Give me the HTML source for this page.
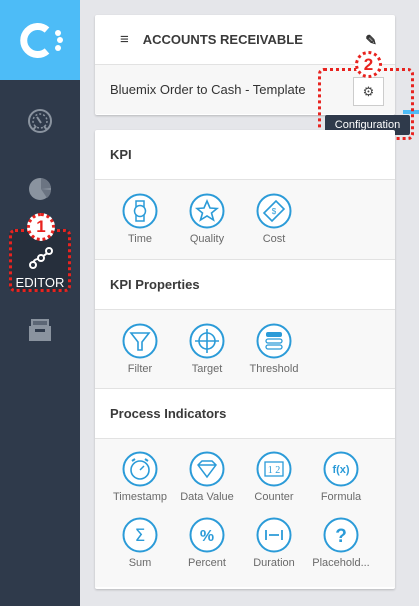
<!DOCTYPE html><html><head><style>
*{margin:0;padding:0;box-sizing:border-box}
body{width:419px;height:606px;background:#e5e6ea;font-family:"Liberation Sans",sans-serif;position:relative;overflow:hidden}
.side{position:absolute;left:0;top:0;width:80px;height:606px;background:#2f3a4b}
.logo{position:absolute;left:0;top:0;width:80px;height:80px;background:#4dbcf7}
.card{position:absolute;left:95px;width:300px;background:#fff;box-shadow:0 1px 2px rgba(0,0,0,.2);border-radius:2px}
.hdr{height:50px;border-bottom:1px solid #e2e2e2;font-weight:bold;font-size:13px;color:#3a3a3a;padding-left:15px;line-height:50px}
.row{background:#f8f8f8;border-bottom:1px solid #e2e2e2;position:relative}
.it{position:absolute;width:68px;text-align:center;font-size:11px;color:#6a6a6a}
.it svg{display:block;margin:0 auto 4px}
.abs{position:absolute}
</style></head><body>
<div class="side"></div>
<div class="logo"><svg width="80" height="80"><path d="M47 30 A14 14 0 1 0 47 51" fill="none" stroke="#fff" stroke-width="7"/><circle cx="58" cy="33" r="3" fill="#fff"/><circle cx="60" cy="40" r="3" fill="#fff"/><circle cx="58" cy="48" r="3" fill="#fff"/></svg></div>
<svg class="abs" style="left:27px;top:108px" width="26" height="26"><circle cx="13" cy="13" r="11" fill="none" stroke="#8a939f" stroke-width="2"/><circle cx="13" cy="13" r="7" fill="none" stroke="#8a939f" stroke-width="1.5" stroke-dasharray="2 2"/><path d="M10 9 L14 15" stroke="#8a939f" stroke-width="2"/><path d="M6 22 L9 18 M20 22 L17 18" stroke="#8a939f" stroke-width="2"/></svg>
<svg class="abs" style="left:27px;top:176px" width="26" height="26"><circle cx="13" cy="13" r="11" fill="#8a939f"/><path d="M14 2 A11 11 0 0 1 24 12 L14 13Z M14 13 L24 14 A11 11 0 0 1 20 22Z" fill="#6b7482"/></svg>
<div class="abs" style="left:9px;top:229px;width:62px;height:63px;background:#262f3c;border:3px dotted #e8231f;border-radius:6px"></div>
<svg class="abs" style="left:28px;top:246px" width="26" height="24"><path d="M5 18 C6 12 9 14 12 12 C14 10 17 10 20 6" fill="none" stroke="#fff" stroke-width="2"/><circle cx="5" cy="19" r="3" fill="#262f3c" stroke="#fff" stroke-width="2"/><circle cx="13" cy="12" r="3" fill="#262f3c" stroke="#fff" stroke-width="2"/><circle cx="21" cy="5" r="3" fill="#262f3c" stroke="#fff" stroke-width="2"/></svg>
<div class="abs" style="left:9px;top:275px;width:62px;text-align:center;color:#fff;font-size:13px">EDITOR</div>
<div class="abs" style="left:27px;top:213px;width:28px;height:28px;border-radius:50%;background:#fff;border:3px dotted #e8231f;color:#e8231f;font-weight:bold;font-size:17px;text-align:center;line-height:22px">1</div>
<svg class="abs" style="left:28px;top:318px" width="24" height="24"><rect x="1" y="8" width="22" height="15" fill="#8a939f"/><path d="M3 1 H21 V8 H3Z" fill="#8a939f"/><path d="M5 4 H19 M5 6 H19" stroke="#2f3a4b" stroke-width="1"/><rect x="7" y="11" width="10" height="3" fill="#2f3a4b"/></svg>

<div class="card" style="top:15px;height:100px">
<div class="hdr" style="padding-left:25px"><span style="font-size:15px;margin-right:14px">&#8801;</span>ACCOUNTS RECEIVABLE<span style="position:absolute;right:18px;font-size:14px;color:#333">&#9998;</span></div>
<div style="background:#f7f7f7;height:49px;line-height:49px;padding-left:15px;font-size:13px;color:#333">Bluemix Order to Cash - Template</div>
</div>
<div class="abs" style="left:353px;top:77px;width:31px;height:29px;background:#fff;border:1px solid #ccc;text-align:center;line-height:27px;font-size:13px;color:#444">&#9881;</div>
<div class="abs" style="left:403px;top:110px;width:16px;height:4px;background:#4dbcf7"></div>
<div class="abs" style="left:325px;top:115px;width:85px;height:20px;background:#2f3a4b;color:#fff;font-size:11px;text-align:center;line-height:20px;border-radius:2px">Configuration</div>
<div class="abs" style="left:318px;top:68px;width:96px;height:72px;border:3px dotted #e8231f;border-radius:6px"></div>
<div class="abs" style="left:355px;top:51px;width:27px;height:27px;border-radius:50%;background:#fff;border:3px dotted #e8231f;color:#e8231f;font-weight:bold;font-size:17px;text-align:center;line-height:21px">2</div>

<div class="card" style="top:130px;height:459px">
<div class="hdr">KPI</div>
<div class="row" style="height:80px">
<div class="it" style="left:11px;top:13px"><svg width="36" height="36"><circle cx="18" cy="18" r="16.5" fill="#fff" stroke="#2b9bd8" stroke-width="2"/><rect x="14" y="8" width="8" height="20" fill="none" stroke="#2b9bd8" stroke-width="1.5"/><circle cx="18" cy="18" r="5.5" fill="#fff" stroke="#2b9bd8" stroke-width="1.5"/></svg>Time</div>
<div class="it" style="left:78px;top:13px"><svg width="36" height="36"><circle cx="18" cy="18" r="16.5" fill="#fff" stroke="#2b9bd8" stroke-width="2"/><path d="M18 8 L21 15 L28 15.5 L22.5 20 L24.5 27 L18 23 L11.5 27 L13.5 20 L8 15.5 L15 15Z" fill="none" stroke="#2b9bd8" stroke-width="1.6"/></svg>Quality</div>
<div class="it" style="left:145px;top:13px"><svg width="36" height="36"><circle cx="18" cy="18" r="16.5" fill="#fff" stroke="#2b9bd8" stroke-width="2"/><path d="M8 20 L20 8 L28 16 L16 28Z" fill="none" stroke="#2b9bd8" stroke-width="1.6"/><text x="18" y="21" font-size="8" fill="#2b9bd8" text-anchor="middle" font-family="Liberation Sans">$</text></svg>Cost</div>
</div>
<div class="hdr">KPI Properties</div>
<div class="row" style="height:79px">
<div class="it" style="left:11px;top:13px"><svg width="36" height="36"><circle cx="18" cy="18" r="16.5" fill="#fff" stroke="#2b9bd8" stroke-width="2"/><path d="M9 10 H27 L20 19 V27 H16 V19Z" fill="none" stroke="#2b9bd8" stroke-width="1.6"/></svg>Filter</div>
<div class="it" style="left:78px;top:13px"><svg width="36" height="36"><circle cx="18" cy="18" r="16.5" fill="#fff" stroke="#2b9bd8" stroke-width="2"/><circle cx="18" cy="18" r="8" fill="none" stroke="#2b9bd8" stroke-width="1.6"/><path d="M18 6 V30 M6 18 H30" stroke="#2b9bd8" stroke-width="1.6"/></svg>Target</div>
<div class="it" style="left:145px;top:13px"><svg width="36" height="36"><circle cx="18" cy="18" r="16.5" fill="#fff" stroke="#2b9bd8" stroke-width="2"/><rect x="10" y="9" width="16" height="5" rx="2" fill="#2b9bd8"/><rect x="10" y="16" width="16" height="4" rx="2" fill="none" stroke="#2b9bd8" stroke-width="1.3"/><rect x="10" y="22" width="16" height="4" rx="2" fill="none" stroke="#2b9bd8" stroke-width="1.3"/></svg>Threshold</div>
</div>
<div class="hdr">Process Indicators</div>
<div class="row" style="height:148px;border-bottom:none">
<div class="it" style="left:11px;top:12px"><svg width="36" height="36"><circle cx="18" cy="18" r="16.5" fill="#fff" stroke="#2b9bd8" stroke-width="2"/><circle cx="18" cy="19" r="9" fill="none" stroke="#2b9bd8" stroke-width="1.6"/><path d="M18 19 L22 15" stroke="#2b9bd8" stroke-width="1.5"/><path d="M10 10 L13 8 M26 10 L23 8" stroke="#2b9bd8" stroke-width="2"/></svg>Timestamp</div>
<div class="it" style="left:78px;top:12px"><svg width="36" height="36"><circle cx="18" cy="18" r="16.5" fill="#fff" stroke="#2b9bd8" stroke-width="2"/><path d="M9 14 L13 10 H23 L27 14 L18 26Z M9 14 H27" fill="none" stroke="#2b9bd8" stroke-width="1.5"/></svg>Data Value</div>
<div class="it" style="left:145px;top:12px"><svg width="36" height="36"><circle cx="18" cy="18" r="16.5" fill="#fff" stroke="#2b9bd8" stroke-width="2"/><rect x="9" y="11" width="18" height="14" fill="none" stroke="#2b9bd8" stroke-width="1.3"/><text x="18" y="22" font-size="10" fill="#2b9bd8" text-anchor="middle" font-family="Liberation Serif">1 2</text></svg>Counter</div>
<div class="it" style="left:212px;top:12px"><svg width="36" height="36"><circle cx="18" cy="18" r="16.5" fill="#fff" stroke="#2b9bd8" stroke-width="2"/><text x="18" y="22" font-size="11" font-weight="bold" fill="#2b9bd8" text-anchor="middle" font-family="Liberation Sans">f(x)</text></svg>Formula</div>
<div class="it" style="left:11px;top:78px"><svg width="36" height="36"><circle cx="18" cy="18" r="16.5" fill="#fff" stroke="#2b9bd8" stroke-width="2"/><text x="18" y="24" font-size="17" fill="#2b9bd8" text-anchor="middle" font-family="DejaVu Sans">Σ</text></svg>Sum</div>
<div class="it" style="left:78px;top:78px"><svg width="36" height="36"><circle cx="18" cy="18" r="16.5" fill="#fff" stroke="#2b9bd8" stroke-width="2"/><text x="18" y="24" font-size="16" font-weight="bold" fill="#2b9bd8" text-anchor="middle" font-family="Liberation Sans">%</text></svg>Percent</div>
<div class="it" style="left:145px;top:78px"><svg width="36" height="36"><circle cx="18" cy="18" r="16.5" fill="#fff" stroke="#2b9bd8" stroke-width="2"/><path d="M10 13 V23 M26 13 V23 M13 18 H23" stroke="#2b9bd8" stroke-width="1.8"/></svg>Duration</div>
<div class="it" style="left:212px;top:78px"><svg width="36" height="36"><circle cx="18" cy="18" r="16.5" fill="#fff" stroke="#2b9bd8" stroke-width="2"/><text x="18" y="25" font-size="19" font-weight="bold" fill="#2b9bd8" text-anchor="middle" font-family="Liberation Sans">?</text></svg>Placehold...</div>
</div>
</div>
</body></html>
